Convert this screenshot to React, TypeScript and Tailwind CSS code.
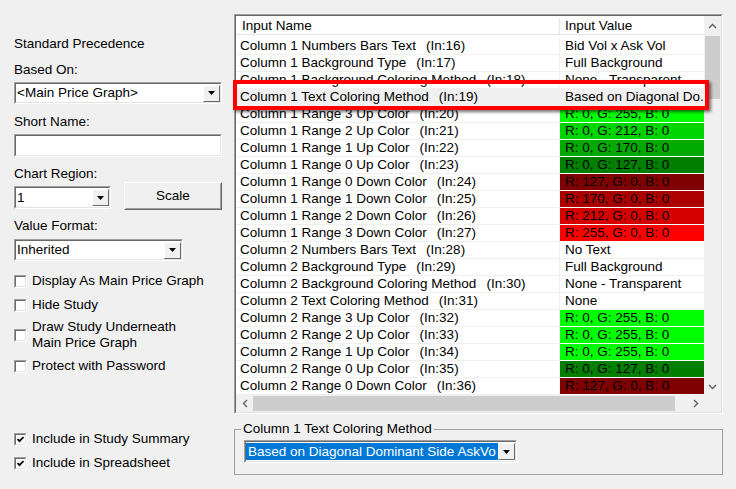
import type { ReactNode } from "react";

type Row = { name: string; n: number; value: string; bg?: string; selected?: boolean };

const rows: Row[] = [
  { name: "Column 1 Numbers Bars Text", n: 16, value: "Bid Vol x Ask Vol" },
  { name: "Column 1 Background Type", n: 17, value: "Full Background" },
  { name: "Column 1 Background Coloring Method", n: 18, value: "None - Transparent" },
  { name: "Column 1 Text Coloring Method", n: 19, value: "Based on Diagonal Do.", selected: true },
  { name: "Column 1 Range 3 Up Color", n: 20, value: "R: 0, G: 255, B: 0", bg: "bg-[#00ff00]" },
  { name: "Column 1 Range 2 Up Color", n: 21, value: "R: 0, G: 212, B: 0", bg: "bg-[#00d400]" },
  { name: "Column 1 Range 1 Up Color", n: 22, value: "R: 0, G: 170, B: 0", bg: "bg-[#00aa00]" },
  { name: "Column 1 Range 0 Up Color", n: 23, value: "R: 0, G: 127, B: 0", bg: "bg-[#007f00]" },
  { name: "Column 1 Range 0 Down Color", n: 24, value: "R: 127, G: 0, B: 0", bg: "bg-[#7f0000]" },
  { name: "Column 1 Range 1 Down Color", n: 25, value: "R: 170, G: 0, B: 0", bg: "bg-[#aa0000]" },
  { name: "Column 1 Range 2 Down Color", n: 26, value: "R: 212, G: 0, B: 0", bg: "bg-[#d40000]" },
  { name: "Column 1 Range 3 Down Color", n: 27, value: "R: 255, G: 0, B: 0", bg: "bg-[#ff0000]" },
  { name: "Column 2 Numbers Bars Text", n: 28, value: "No Text" },
  { name: "Column 2 Background Type", n: 29, value: "Full Background" },
  { name: "Column 2 Background Coloring Method", n: 30, value: "None - Transparent" },
  { name: "Column 2 Text Coloring Method", n: 31, value: "None" },
  { name: "Column 2 Range 3 Up Color", n: 32, value: "R: 0, G: 255, B: 0", bg: "bg-[#00ff00]" },
  { name: "Column 2 Range 2 Up Color", n: 33, value: "R: 0, G: 255, B: 0", bg: "bg-[#00ff00]" },
  { name: "Column 2 Range 1 Up Color", n: 34, value: "R: 0, G: 255, B: 0", bg: "bg-[#00ff00]" },
  { name: "Column 2 Range 0 Up Color", n: 35, value: "R: 0, G: 127, B: 0", bg: "bg-[#007f00]" },
  { name: "Column 2 Range 0 Down Color", n: 36, value: "R: 127, G: 0, B: 0", bg: "bg-[#7f0000]" },
];

// classic sunken 2px frame
function Sunken({ className, inner, children }: { className: string; inner?: string; children?: ReactNode }) {
  return (
    <div className={`border border-t-[#a0a0a0] border-l-[#a0a0a0] border-r-white border-b-white ${className}`}>
      <div
        className={`flex h-full border border-t-[#696969] border-l-[#696969] border-r-[#e3e3e3] border-b-[#e3e3e3] ${inner ?? "bg-white"}`}
      >
        {children}
      </div>
    </div>
  );
}

function DropButton() {
  return (
    <div className="flex h-[17px] w-[17px] shrink-0 items-center justify-center self-center border border-t-white border-l-white border-r-[#696969] border-b-[#696969] bg-[#f0f0f0]">
      <svg width="7" height="4" viewBox="0 0 7 4">
        <polygon points="0,0 7,0 3.5,4" fill="#000" />
      </svg>
    </div>
  );
}

function Combo({ className, value, selected }: { className: string; value: string; selected?: boolean }) {
  return (
    <Sunken className={className}>
      <div className="flex min-w-0 flex-1 items-center overflow-hidden">
        {selected ? (
          <span className="flex h-[17px] flex-1 items-center overflow-hidden whitespace-nowrap bg-[#0078d7] pl-[2px] text-white">
            {value}
          </span>
        ) : (
          <span className="whitespace-nowrap pl-px">{value}</span>
        )}
      </div>
      <DropButton />
    </Sunken>
  );
}

function Box({ checked }: { checked?: boolean }) {
  return (
    <Sunken className="h-[13px] w-[13px] shrink-0">
      <div className="flex flex-1 items-center justify-center">
        {checked && (
          <svg width="7" height="7" viewBox="0 0 7 7">
            <polyline points="0.5,3 2.5,5.2 6.5,1" fill="none" stroke="#000" strokeWidth="1.8" />
          </svg>
        )}
      </div>
    </Sunken>
  );
}

function CheckRow({ className, checked, children }: { className: string; checked?: boolean; children: ReactNode }) {
  return (
    <div className={`flex items-center gap-[5px] ${className}`}>
      <Box checked={checked} />
      <div>{children}</div>
    </div>
  );
}

function Chevron({ dir }: { dir: "up" | "down" | "left" | "right" }) {
  const pts = {
    up: "1,5 4.5,1.5 8,5",
    down: "1,1 4.5,4.5 8,1",
    left: "5,1 1.5,4.5 5,8",
    right: "1,1 4.5,4.5 1,8",
  }[dir];
  const vertical = dir === "up" || dir === "down";
  return (
    <svg width={vertical ? 9 : 6} height={vertical ? 6 : 9} viewBox={vertical ? "0 0 9 6" : "0 0 6 9"}>
      <polyline points={pts} fill="none" stroke="#606060" strokeWidth="1.4" />
    </svg>
  );
}

export default function App() {
  return (
    <div className="flex h-[489px] w-[736px] bg-[#f0f0f0] font-['Liberation_Sans',Arial,sans-serif] text-[13.5px] leading-[16px] text-black">
      {/* left settings column */}
      <div className="flex w-[234px] shrink-0 flex-col pl-[14px] pt-[36px]">
        <div>Standard Precedence</div>
        <div className="mt-[10px]">Based On:</div>
        <Combo className="mt-[4px] h-[22px] w-[208px]" value="<Main Price Graph>" />
        <div className="mt-[10px]">Short Name:</div>
        <Sunken className="mt-[4px] h-[23px] w-[208px]" />
        <div className="mt-[9px]">Chart Region:</div>
        <div className="flex items-start">
          <Combo className="mt-[4px] h-[23px] w-[97px]" value="1" />
          <div className="ml-[13px] h-[28px] w-[98px] border border-t-white border-l-white border-r-[#696969] border-b-[#696969]">
            <div className="flex h-full items-center justify-center border border-t-[#f0f0f0] border-l-[#f0f0f0] border-r-[#a0a0a0] border-b-[#a0a0a0] bg-[#f0f0f0]">
              Scale
            </div>
          </div>
        </div>
        <div className="mt-[8px]">Value Format:</div>
        <Combo className="mt-[5px] h-[22px] w-[169px]" value="Inherited" />
        <CheckRow className="mt-[12px]">Display As Main Price Graph</CheckRow>
        <CheckRow className="mt-[8px]">Hide Study</CheckRow>
        <CheckRow className="mt-[6px]">
          Draw Study Underneath
          <br />
          Main Price Graph
        </CheckRow>
        <CheckRow className="mt-[7px]">Protect with Password</CheckRow>
        <CheckRow className="mt-[57px]" checked>
          Include in Study Summary
        </CheckRow>
        <CheckRow className="mt-[8px]" checked>
          Include in Spreadsheet
        </CheckRow>
      </div>

      {/* right: inputs list */}
      <div className="flex flex-col pt-[14px]">
        <div className="relative h-[400px] w-[489px]">
          <Sunken className="h-full w-full" inner="flex-col bg-white">
            <div className="flex min-h-0 flex-1">
              <div className="flex w-[468px] flex-col overflow-hidden">
                <div className="flex h-[19px] shrink-0 items-center border-b border-[#e5e5e5] pt-[2px]">
                  <div className="w-[323px] pl-[6px]">Input Name</div>
                  <div className="h-full w-px bg-[#e5e5e5]" />
                  <div className="w-[144px] pl-[5px]">Input Value</div>
                </div>
                <div className="h-[3px] shrink-0" />
                {rows.map((r) => (
                  <div key={r.n} className="flex h-[17px] shrink-0">
                    <div
                      className={`flex w-[323px] items-center whitespace-nowrap border-b border-[#f0f0f0] pl-[4px] ${
                        r.selected ? "bg-[#f0f0f0]" : ""
                      }`}
                    >
                      {r.name}
                      <span className="ml-[10px]">(In:{r.n})</span>
                    </div>
                    <div className="w-px bg-[#f0f0f0]" />
                    <div
                      className={`flex w-[144px] items-center overflow-hidden whitespace-nowrap border-b pl-[5px] ${
                        r.bg ? `${r.bg} border-white` : r.selected ? "border-[#f0f0f0] bg-[#f0f0f0]" : "border-[#f0f0f0]"
                      }`}
                    >
                      {r.value}
                    </div>
                  </div>
                ))}
              </div>
              <div className="flex w-[17px] flex-col bg-[#f0f0f0]">
                <div className="flex h-[20px] items-center justify-center">
                  <Chevron dir="up" />
                </div>
                <div className="mx-px h-[63px] bg-[#cdcdcd]" />
                <div className="flex-1" />
                <div className="flex h-[17px] items-center justify-center">
                  <Chevron dir="down" />
                </div>
              </div>
            </div>
            <div className="flex h-[17px] shrink-0 bg-[#f0f0f0]">
              <div className="flex w-[17px] items-center justify-center">
                <Chevron dir="left" />
              </div>
              <div className="my-px w-[422px] bg-[#cdcdcd]" />
              <div className="flex-1" />
              <div className="flex w-[17px] items-center justify-center">
                <Chevron dir="right" />
              </div>
              <div className="w-[17px]" />
            </div>
          </Sunken>
          {/* annotation highlight */}
          <div className="pointer-events-none absolute left-[-1px] top-[66px] h-[30px] w-[476px] border-[4px] border-[#ff0000] shadow-[2px_2px_3px_rgba(0,0,0,0.55)]" />
        </div>

        <div className="relative mt-[15px] h-[46px] w-[489px] border border-[#a0a0a0] pl-[9px] pt-[10px]">
          <div className="absolute left-[6px] top-[-9px] bg-[#f0f0f0] px-[2px]">Column 1 Text Coloring Method</div>
          <Combo className="h-[23px] w-[273px]" value="Based on Diagonal Dominant Side AskVo" selected />
        </div>
      </div>
    </div>
  );
}
